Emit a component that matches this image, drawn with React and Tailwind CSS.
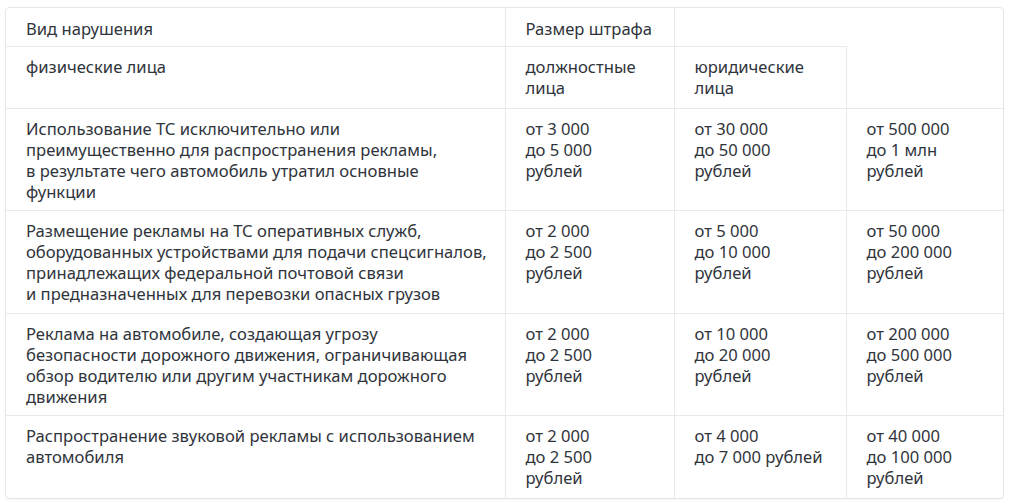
import React from "react";

const rows = [
  {
    v: "Использование ТС исключительно или\nпреимущественно для распространения рекламы,\nв результате чего автомобиль утратил основные\nфункции",
    a: "от 3 000\nдо 5 000\nрублей",
    b: "от 30 000\nдо 50 000\nрублей",
    c: "от 500 000\nдо 1 млн\nрублей",
    pb: "pb-[8px]",
  },
  {
    v: "Размещение рекламы на ТС оперативных служб,\nоборудованных устройствами для подачи спецсигналов,\nпринадлежащих федеральной почтовой связи\nи предназначенных для перевозки опасных грузов",
    a: "от 2 000\nдо 2 500\nрублей",
    b: "от 5 000\nдо 10 000\nрублей",
    c: "от 50 000\nдо 200 000\nрублей",
    pb: "pb-[9px]",
  },
  {
    v: "Реклама на автомобиле, создающая угрозу\nбезопасности дорожного движения, ограничивающая\nобзор водителю или другим участникам дорожного\nдвижения",
    a: "от 2 000\nдо 2 500\nрублей",
    b: "от 10 000\nдо 20 000\nрублей",
    c: "от 200 000\nдо 500 000\nрублей",
    pb: "pb-[8px]",
  },
  {
    v: "Распространение звуковой рекламы с использованием\nавтомобиля",
    a: "от 2 000\nдо 2 500\nрублей",
    b: "от 4 000\nдо 7 000 рублей",
    c: "от 40 000\nдо 100 000\nрублей",
    pb: "pb-[10px]",
  },
];

const cell =
  "border border-[#e9e9e9] px-5 pt-[9px] align-top text-left font-normal whitespace-pre";

export default function App() {
  return (
    <div className="bg-white w-[1009px] h-[500px] pt-[7px] pl-[5px]">
      <div
        className="w-[999px] border border-[#e6e6e6] rounded-[4px] overflow-hidden shadow-[0_1px_2px_rgba(0,0,0,0.04)] text-[16.6px] leading-[21px] text-[#30343b]"
        style={{ fontFamily: '"Noto Sans", "Open Sans", sans-serif' }}
      >
        <table className="border-collapse border-hidden w-[997px] table-fixed">
          <colgroup>
            <col className="w-[499px]" />
            <col className="w-[169px]" />
            <col className="w-[172px]" />
            <col className="w-[157px]" />
          </colgroup>
          <tbody>
            <tr>
              <td className={cell + " pt-[10px] pb-[7px]"}>Вид нарушения</td>
              <td className={cell + " pt-[10px] pb-[7px]"}>Размер штрафа</td>
            </tr>
            <tr>
              <td className={cell + " pb-[10px]"}>физические лица</td>
              <td className={cell + " pb-[10px]"}>{"должностные\nлица"}</td>
              <td className={cell + " pb-[10px]"}>{"юридические\nлица"}</td>
            </tr>
            {rows.map((r, i) => (
              <tr key={i}>
                <td className={cell + " " + r.pb}>{r.v}</td>
                <td className={cell + " " + r.pb}>{r.a}</td>
                <td className={cell + " " + r.pb}>{r.b}</td>
                <td className={cell + " " + r.pb}>{r.c}</td>
              </tr>
            ))}
          </tbody>
        </table>
      </div>
    </div>
  );
}
